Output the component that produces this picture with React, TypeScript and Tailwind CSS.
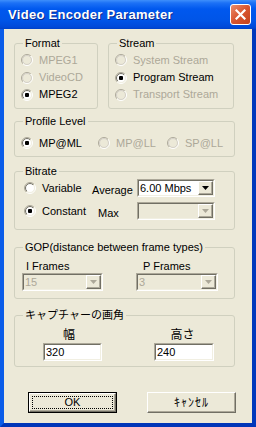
import React from 'react';

/**
 * Video Encoder Parameter dialog (Windows XP look)
 */

const ui = "font-['Liberation_Sans','Noto_Sans_CJK_JP',sans-serif] text-[11px] text-black";

function Radio({ checked = false, disabled = false }: { checked?: boolean; disabled?: boolean }) {
    return (
        <svg width="12" height="12" viewBox="0 0 12 12" className="shrink-0">
            <defs>
                <linearGradient id="rOuter" x1="0" y1="0" x2="1" y2="1">
                    <stop offset="0.5" stopColor="#ACA899" />
                    <stop offset="0.5" stopColor="#FFFFFF" />
                </linearGradient>
                <linearGradient id="rInner" x1="0" y1="0" x2="1" y2="1">
                    <stop offset="0.5" stopColor="#716F64" />
                    <stop offset="0.5" stopColor="#F1EFE2" />
                </linearGradient>
            </defs>
            <circle cx="6" cy="6" r="5.5" fill="none" stroke="url(#rOuter)" />
            <circle cx="6" cy="6" r="4.5" fill={disabled ? '#ECE9D8' : '#FFFFFF'} stroke={disabled ? '#D4D0C8' : 'url(#rInner)'} />
            {checked && <rect x="4" y="4" width="4" height="4" rx="1" fill={disabled ? '#ACA899' : '#000000'} />}
        </svg>
    );
}

function RadioItem({ label, checked, disabled, className = '' }: { label: string; checked?: boolean; disabled?: boolean; className?: string }) {
    return (
        <div className={`flex items-center gap-[6px] ${className}`}>
            <Radio checked={checked} disabled={disabled} />
            <span className={disabled ? 'text-[#ACA899]' : 'text-black'}>{label}</span>
        </div>
    );
}

function Group({ label, className = '', children }: { label: string; className?: string; children?: React.ReactNode }) {
    return (
        <div className={`relative rounded-[3px] border border-[#D0D0BF] ${className}`}>
            <span className="absolute -top-[8px] left-[8px] bg-[#ECE9D8] px-[2px] leading-[14px]">{label}</span>
            {children}
        </div>
    );
}

function DropArrow({ disabled = false }: { disabled?: boolean }) {
    return (
        <div className="flex w-[15px] items-center justify-center border border-b-[#716F64] border-l-white border-r-[#716F64] border-t-white bg-[#ECE9D8] shadow-[inset_-1px_-1px_0_#ACA899]">
            <svg width="7" height="4" viewBox="0 0 7 4">
                <path d="M0 0H7L3.5 4Z" fill={disabled ? '#ACA899' : '#000000'} />
            </svg>
        </div>
    );
}

function Combo({ value = '', disabled = false, className = '' }: { value?: string; disabled?: boolean; className?: string }) {
    return (
        <div className={`flex h-[18px] border border-b-white border-l-[#ACA899] border-r-white border-t-[#ACA899] ${className}`}>
            <div className={`flex flex-1 border border-b-[#F1EFE2] border-l-[#716F64] border-r-[#F1EFE2] border-t-[#716F64] ${disabled ? 'bg-[#ECE9D8]' : 'bg-white'}`}>
                <span className={`flex-1 pl-[1px] leading-[14px] ${disabled ? 'text-[#ACA899]' : 'text-black'}`}>{value}</span>
                <DropArrow disabled={disabled} />
            </div>
        </div>
    );
}

function TextBox({ value, className = '' }: { value: string; className?: string }) {
    return (
        <div className={`h-[18px] border border-b-white border-l-[#ACA899] border-r-white border-t-[#ACA899] ${className}`}>
            <div className="h-full border border-b-[#F1EFE2] border-l-[#716F64] border-r-[#F1EFE2] border-t-[#716F64] bg-white pl-[1px] leading-[14px]">
                {value}
            </div>
        </div>
    );
}

export default function App() {
    return (
        <div className={`flex h-[427px] w-[256px] flex-col bg-[#0055E5] ${ui}`}>
            {/* Title bar */}
            <div className="flex h-[29px] shrink-0 items-center justify-between bg-[linear-gradient(180deg,#3E8FFB_0px,#1C71F6_3px,#0058EE_9px,#0055E8_20px,#0049D9_27px,#0040C6_29px)] pl-[8px] pr-[5px]">
                <span className="text-[13px] font-bold tracking-[0.3px] text-white [text-shadow:1px_1px_0_#0F2A8A]">
                    Video Encoder Parameter
                </span>
                <div className="flex h-[21px] w-[21px] items-center justify-center rounded-[3px] border border-white bg-[linear-gradient(135deg,#EB8D6C_0%,#D8552F_50%,#C4411C_100%)]">
                    <svg width="11" height="11" viewBox="0 0 11 11">
                        <path d="M1.5 1.5L9.5 9.5M9.5 1.5L1.5 9.5" stroke="#FFFFFF" strokeWidth="2.2" strokeLinecap="square" />
                    </svg>
                </div>
            </div>

            {/* Frame + client */}
            <div className="flex flex-1 border-b-[4px] border-l-[4px] border-r-[4px] border-b-[#0035B8] border-l-[#0A5CE8] border-r-[#0038BC]">
                <div className="flex flex-1 flex-col bg-[#ECE9D8] pl-[10px] pt-[14px]">
                    {/* Format / Stream */}
                    <div className="flex gap-[10px]">
                        <Group label="Format" className="h-[66px] w-[84px]">
                            <div className="flex flex-col pl-[6px] pt-[7px]">
                                <RadioItem label="MPEG1" disabled className="h-[18px]" />
                                <RadioItem label="VideoCD" disabled className="h-[17px]" />
                                <RadioItem label="MPEG2" checked className="h-[17px]" />
                            </div>
                        </Group>
                        <Group label="Stream" className="h-[66px] w-[126px]">
                            <div className="flex flex-col pl-[6px] pt-[7px]">
                                <RadioItem label="System Stream" disabled className="h-[18px]" />
                                <RadioItem label="Program Stream" checked className="h-[17px]" />
                                <RadioItem label="Transport Stream" disabled className="h-[17px]" />
                            </div>
                        </Group>
                    </div>

                    {/* Profile Level */}
                    <Group label="Profile Level" className="mt-[12px] h-[36px] w-[221px]">
                        <div className="flex h-[16px] pl-[6px] mt-[13px]">
                            <RadioItem label="MP@ML" checked className="w-[77px]" />
                            <RadioItem label="MP@LL" disabled className="w-[69px]" />
                            <RadioItem label="SP@LL" disabled />
                        </div>
                    </Group>

                    {/* Bitrate */}
                    <Group label="Bitrate" className="mt-[14px] h-[59px] w-[221px]">
                        <div className="flex flex-col gap-[5px] pl-[9px] pt-[7px]">
                            <div className="flex h-[18px] items-center">
                                <RadioItem label="Variable" className="w-[68px]" />
                                <span className="w-[45px] pt-[4px]">Average</span>
                                <Combo value="6.00 Mbps" className="w-[78px]" />
                            </div>
                            <div className="flex h-[18px] items-center">
                                <RadioItem label="Constant" checked className="w-[68px]" />
                                <span className="w-[45px] pl-[6px] pt-[4px]">Max</span>
                                <Combo disabled className="w-[78px]" />
                            </div>
                        </div>
                    </Group>

                    {/* GOP */}
                    <Group label="GOP(distance between frame types)" className="mt-[17px] h-[52px] w-[221px]">
                        <div className="flex gap-[33px] pl-[7px] pt-[11px]">
                            <div className="flex w-[81px] flex-col">
                                <span className="h-[14px] pl-[4px] leading-[14px]">I Frames</span>
                                <Combo value="15" disabled />
                            </div>
                            <div className="flex w-[82px] flex-col">
                                <span className="h-[14px] pl-[7px] leading-[14px]">P Frames</span>
                                <Combo value="3" disabled />
                            </div>
                        </div>
                    </Group>

                    {/* Capture size */}
                    <Group label="キャプチャーの画角" className="mt-[16px] h-[52px] w-[221px]">
                        <div className="flex gap-[52px] pl-[28px] pt-[11px]">
                            <div className="flex w-[59px] flex-col">
                                <span className="h-[16px] pr-[7px] text-center text-[12px] leading-[16px]">幅</span>
                                <TextBox value="320" />
                            </div>
                            <div className="flex w-[60px] flex-col">
                                <span className="h-[16px] pr-[3px] text-center text-[12px] leading-[16px]">高さ</span>
                                <TextBox value="240" />
                            </div>
                        </div>
                    </Group>

                    {/* Buttons */}
                    <div className="ml-[14px] mt-[25px] flex gap-[30px]">
                        <button type="button" className="h-[21px] w-[89px] border border-black bg-[#ECE9D8] p-0">
                            <div className="h-full w-full border border-b-[#716F64] border-l-white border-r-[#716F64] border-t-white p-[2px] shadow-[inset_-1px_-1px_0_#ACA899]">
                                <div className="flex h-full w-full items-center justify-center border border-dotted border-black leading-[11px]">
                                    OK
                                </div>
                            </div>
                        </button>
                        <button
                            type="button"
                            className="flex h-[21px] w-[89px] items-center justify-center border border-b-[#716F64] border-l-white border-r-[#716F64] border-t-white bg-[#ECE9D8] p-0 text-[12px] tracking-[1px] shadow-[inset_-1px_-1px_0_#ACA899]"
                        >
                            ｷｬﾝｾﾙ
                        </button>
                    </div>
                </div>
            </div>
        </div>
    );
}
